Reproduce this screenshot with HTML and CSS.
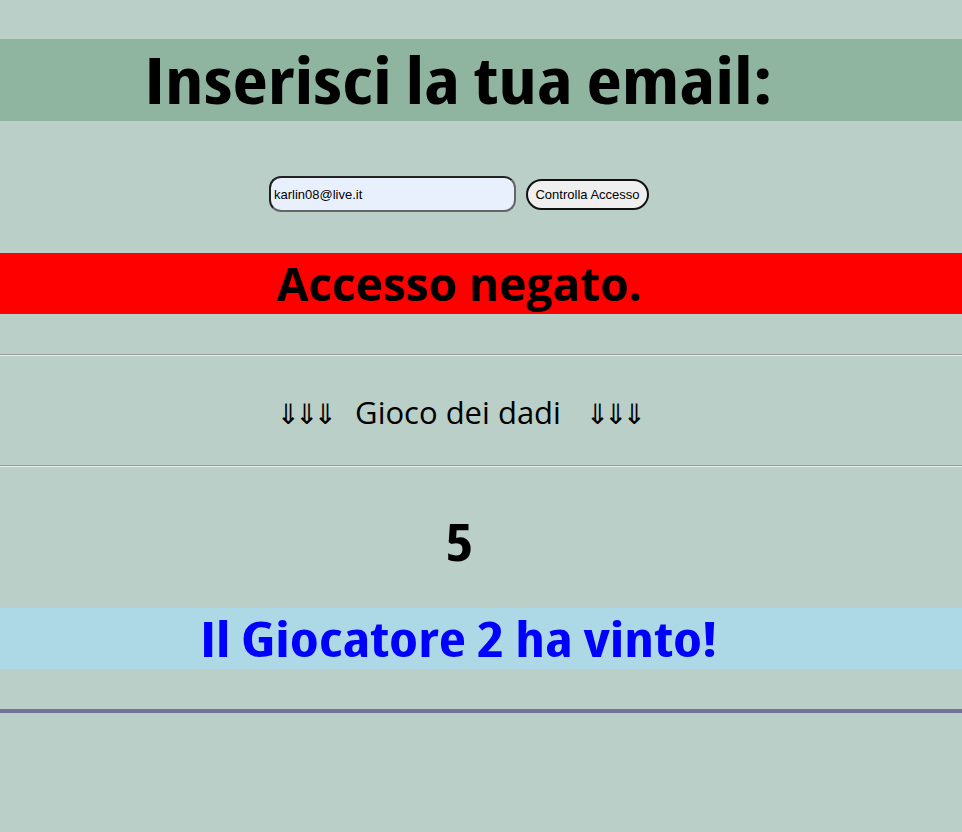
FILE: index.html
```html
<!DOCTYPE html>
<html lang="it">
<head>
<meta charset="utf-8">
<title>Gioco dei dadi</title>
<link rel="stylesheet" href="styles.css">
</head>
<body>
<h1 class="title"><span class="wide wide-title">Inserisci la tua email:</span></h1>
<form class="access-form">
  <input class="email" type="text" value="karlin08@live.it">
  <button class="check" type="button">Controlla Accesso</button>
</form>
<h2 class="denied">Accesso negato.</h2>
<hr class="sep">
<p class="game"><span class="arrows arrows-left">⇓⇓⇓</span><span class="game-label">Gioco dei dadi</span><span class="arrows arrows-right">⇓⇓⇓</span></p>
<hr class="sep">
<p class="dice"><span class="wide wide-dice">5</span></p>
<h2 class="winner"><span class="wide wide-winner">Il Giocatore 2 ha vinto!</span></h2>
<div class="bottom-line"></div>
</body>
</html>
```
FILE: styles.css
```css
html {
  background: #bacfc7;
}
body {
  margin: 0;
  padding: 39px 0 0;
  font-family: "Open Sans", "DejaVu Sans", sans-serif;
  color: #000;
}
.wide {
  display: inline-block;
  font-stretch: 75%;
}
.wide-title {
  transform: scaleX(1.205);
}
.wide-winner {
  transform: scaleX(1.215);
}
.wide-dice {
  transform: scaleX(1.15);
}
.title {
  margin: 0;
  height: 82px;
  background: #8fb5a0;
  text-align: center;
  padding-right: 44px;
  font-size: 64px;
  line-height: 82px;
  font-weight: 700;
}
.access-form {
  display: flex;
  justify-content: center;
  align-items: center;
  gap: 10px;
  padding: 55px 44px 0 0;
  margin: 0;
  height: 36px;
}
.email {
  box-sizing: border-box;
  width: 247px;
  height: 36px;
  border: 2px solid #222;
  border-right-color: #666;
  border-bottom-color: #666;
  border-radius: 12px;
  background: #e8f0fe;
  padding: 0 3px;
  font-family: "Liberation Sans", Arial, sans-serif;
  font-size: 13px;
  color: #000;
}
.check {
  box-sizing: border-box;
  width: 123px;
  height: 31px;
  border: 2px solid #111;
  border-radius: 16px;
  background: #efefef;
  padding: 0;
  font-family: "Liberation Sans", Arial, sans-serif;
  font-size: 13px;
  color: #000;
}
.denied {
  margin: 41px 0 0;
  height: 61px;
  background: #ff0000;
  text-align: center;
  padding-right: 44px;
  font-size: 46px;
  line-height: 61px;
  font-weight: 700;
}
.sep {
  margin: 40px 0 0;
  border: 0;
  border-top: 1px solid #9a9a9a;
  border-bottom: 1px solid #e6ece9;
  height: 0;
}
.game {
  margin: 0;
  height: 109px;
  text-align: center;
  padding-right: 44px;
  font-size: 31px;
  line-height: 112px;
}
.game + .sep {
  margin-top: 0;
}
.arrows {
  font-family: "DejaVu Sans", sans-serif;
  font-size: 28px;
  letter-spacing: -5px;
}
.arrows-left {
  margin-right: 23px;
}
.arrows-right {
  margin-left: 25px;
}
.dice {
  height: 141px;
  margin: 0;
  text-align: center;
  padding-right: 44px;
  font-size: 52px;
  line-height: 148px;
  font-weight: 700;
}
.winner {
  margin: 0;
  height: 61px;
  background: #add8e6;
  color: #0000ff;
  text-align: center;
  padding-right: 44px;
  font-size: 49px;
  line-height: 61px;
  font-weight: 700;
}
.bottom-line {
  margin-top: 40px;
  height: 4px;
  background: #737496;
}
```
